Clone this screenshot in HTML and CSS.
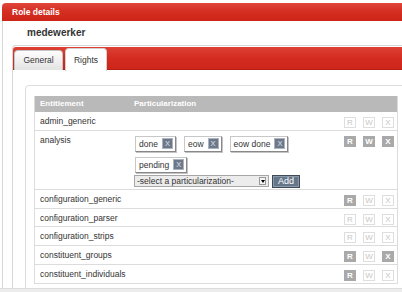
FILE: index.html
```html
<!DOCTYPE html>
<html lang="nl">
<head>
<meta charset="utf-8">
<title>Role details</title>
<link rel="stylesheet" href="styles.css">
</head>
<body>
<div class="page">
  <div class="panel">
    <div class="panel-head">Role details</div>
    <div class="panel-body">
      <h1 class="title">medewerker</h1>
      <div class="tabs">
        <div class="tabbar">
          <div class="tab">General</div>
          <div class="tab active">Rights</div>
        </div>
        <div class="tab-content">
          <div class="box">
            <table class="rights">
              <colgroup><col class="w-ent"><col class="w-part"><col class="w-rwx"></colgroup>
              <thead>
                <tr><th>Entitlement</th><th>Particularization</th><th></th></tr>
              </thead>
              <tbody>
                <tr>
                  <td>admin_generic</td><td></td>
                  <td class="rwx"><div class="flags"><span class="flag">R</span><span class="flag">W</span><span class="flag">X</span></div></td>
                </tr>
                <tr>
                  <td>analysis</td>
                  <td class="parts">
                    <div class="tags">
                      <span class="tag">done<span class="tag-x">X</span></span>
                      <span class="tag">eow<span class="tag-x">X</span></span>
                      <span class="tag">eow done<span class="tag-x">X</span></span>
                      <span class="tag">pending<span class="tag-x">X</span></span>
                    </div>
                    <div class="add-row">
                      <div class="select">-select a particularization-<span class="arrow"></span></div>
                      <span class="btn">Add</span>
                    </div>
                  </td>
                  <td class="rwx"><div class="flags"><span class="flag on">R</span><span class="flag on">W</span><span class="flag on">X</span></div></td>
                </tr>
                <tr>
                  <td>configuration_generic</td><td></td>
                  <td class="rwx"><div class="flags"><span class="flag on">R</span><span class="flag">W</span><span class="flag">X</span></div></td>
                </tr>
                <tr>
                  <td>configuration_parser</td><td></td>
                  <td class="rwx"><div class="flags"><span class="flag">R</span><span class="flag">W</span><span class="flag">X</span></div></td>
                </tr>
                <tr>
                  <td>configuration_strips</td><td></td>
                  <td class="rwx"><div class="flags"><span class="flag">R</span><span class="flag">W</span><span class="flag">X</span></div></td>
                </tr>
                <tr>
                  <td>constituent_groups</td><td></td>
                  <td class="rwx"><div class="flags"><span class="flag on">R</span><span class="flag">W</span><span class="flag on">X</span></div></td>
                </tr>
                <tr>
                  <td>constituent_individuals</td><td></td>
                  <td class="rwx"><div class="flags"><span class="flag on">R</span><span class="flag">W</span><span class="flag">X</span></div></td>
                </tr>
              </tbody>
            </table>
          </div>
        </div>
      </div>
    </div>
  </div>
</div>
<div class="hscroll"></div>
</body>
</html>
```

FILE: styles.css
```css
html, body {
  margin: 0;
  padding: 0;
  overflow: hidden;
  background: #fff;
}

body {
  font-family: "Liberation Sans", Arial, sans-serif;
  font-size: 8.5px;
  color: #333;
}

.page {
  padding: 3px 0 0 2px;
  width: 440px;
}

.panel-head {
  height: 18px;
  line-height: 18px;
  padding-left: 10px;
  color: #fff;
  font-weight: bold;
  font-size: 8.5px;
  background: linear-gradient(#e1473c, #d52e22 45%, #cc2518);
  border-radius: 4px 0 0 0;
}

.panel-body {
  border-left: 1px solid #d8d8d8;
  padding-left: 9px;
}

.title {
  margin: 0;
  padding: 6px 0 6px 15px;
  font-size: 10px;
  line-height: 12px;
  font-weight: bold;
  color: #333;
}

.tabs {
  border: 1px solid #d6d6d6;
  border-right: none;
  border-radius: 4px 0 0 0;
  padding-top: 1px;
}

.tabbar {
  height: 23px;
  box-sizing: border-box;
  display: flex;
  align-items: flex-end;
  gap: 2px;
  padding-left: 1px;
  background: linear-gradient(#de4035, #d42c20 50%, #cd2519);
  border-bottom: 1px solid #b81f14;
  border-radius: 3px 0 0 0;
}

.tab {
  box-sizing: border-box;
  height: 20px;
  line-height: 19px;
  width: 49px;
  text-align: center;
  color: #333;
  background: linear-gradient(#fdfdfd, #e3e3e3);
  border: 1px solid #c4c4c4;
  border-bottom: none;
  border-radius: 4px 4px 0 0;
  margin-bottom: -1px;
}

.tab.active {
  width: 42px;
  height: 23px;
  line-height: 22px;
  background: #fff;
  border-color: #d0d0d0;
  margin-bottom: -2px;
}

.tab-content {
  padding: 15px 0 0 12px;
}

.box {
  border: 1px solid #dcdcdc;
  border-radius: 4px;
  padding: 10px 8px;
}

.rights {
  width: 364px;
  border-collapse: separate;
  border-spacing: 0;
  table-layout: fixed;
  border-left: 1px solid #dcdcdc;
  border-right: 1px solid #dcdcdc;
}

.w-ent { width: 94px; }
.w-part { width: 211px; }
.w-rwx { width: 57px; }

.rights th {
  height: 16px;
  padding: 0 5px;
  line-height: 16px;
  background: #b9b9b9;
  color: #fff;
  font-size: 8px;
  font-weight: bold;
  text-align: left;
  vertical-align: middle;
}

.rights td {
  padding: 4px 5px 3px;
  line-height: 10.75px;
  vertical-align: top;
  border-bottom: 1px solid #dcdcdc;
  white-space: nowrap;
}

.rights td.rwx {
  padding: 5px 3px 0 0;
}

.rights td.parts {
  padding: 5px 5px 1px 6px;
}

.flags {
  display: flex;
  justify-content: flex-end;
  gap: 7px;
}

.flag {
  box-sizing: border-box;
  width: 12px;
  height: 11px;
  border: 1px solid #dedede;
  color: #c6c6c6;
  font-size: 8px;
  line-height: 9px;
  text-align: center;
}

.flag.on {
  background: #a9a9a9;
  border-color: #a9a9a9;
  color: #fff;
  font-weight: bold;
}

.tags {
  display: flex;
  flex-wrap: wrap;
  width: 205px;
  column-gap: 8px;
  row-gap: 5px;
}

.tag {
  box-sizing: border-box;
  display: inline-flex;
  align-items: center;
  height: 16px;
  padding: 0 2px 0 3px;
  background: #fff;
  border: 1px solid #c8c8c8;
  border-right-color: #888;
  border-bottom-color: #888;
  box-shadow: 1px 1px 0 #c4c4c4;
  color: #333;
  line-height: 14px;
}

.tag-x {
  box-sizing: border-box;
  width: 11px;
  height: 11px;
  margin-left: 4px;
  background: #6d798a;
  border: 1px solid #aab3bf;
  color: #dfe4ea;
  font-size: 7.5px;
  line-height: 9px;
  text-align: center;
}

.add-row {
  display: flex;
  align-items: flex-start;
  margin-top: 2px;
  margin-left: -1px;
}

.select {
  box-sizing: border-box;
  position: relative;
  width: 135px;
  height: 12px;
  line-height: 10px;
  padding-left: 2px;
  background: #ececec;
  border: 1px solid #a6a6a6;
  color: #333;
}

.arrow {
  position: absolute;
  right: 2px;
  top: 1px;
  width: 7px;
  height: 8px;
  box-sizing: border-box;
  background: #f4f4f4;
  border: 1px solid #999;
}

.arrow::after {
  content: "";
  position: absolute;
  left: 1px;
  top: 2px;
  border-left: 2px solid transparent;
  border-right: 2px solid transparent;
  border-top: 3px solid #000;
}

.btn {
  box-sizing: border-box;
  margin-left: 3px;
  width: 28px;
  height: 13px;
  line-height: 11px;
  text-align: center;
  background: #66778b;
  border: 1px solid #3f4a58;
  box-shadow: inset 0 0 0 1px #8d9aaa;
  color: #fff;
  font-size: 9px;
}

.hscroll {
  position: fixed;
  left: 0;
  right: 0;
  bottom: 0;
  height: 3px;
  background: #ececec;
  border-top: 1px solid #dcdcdc;
}
```
